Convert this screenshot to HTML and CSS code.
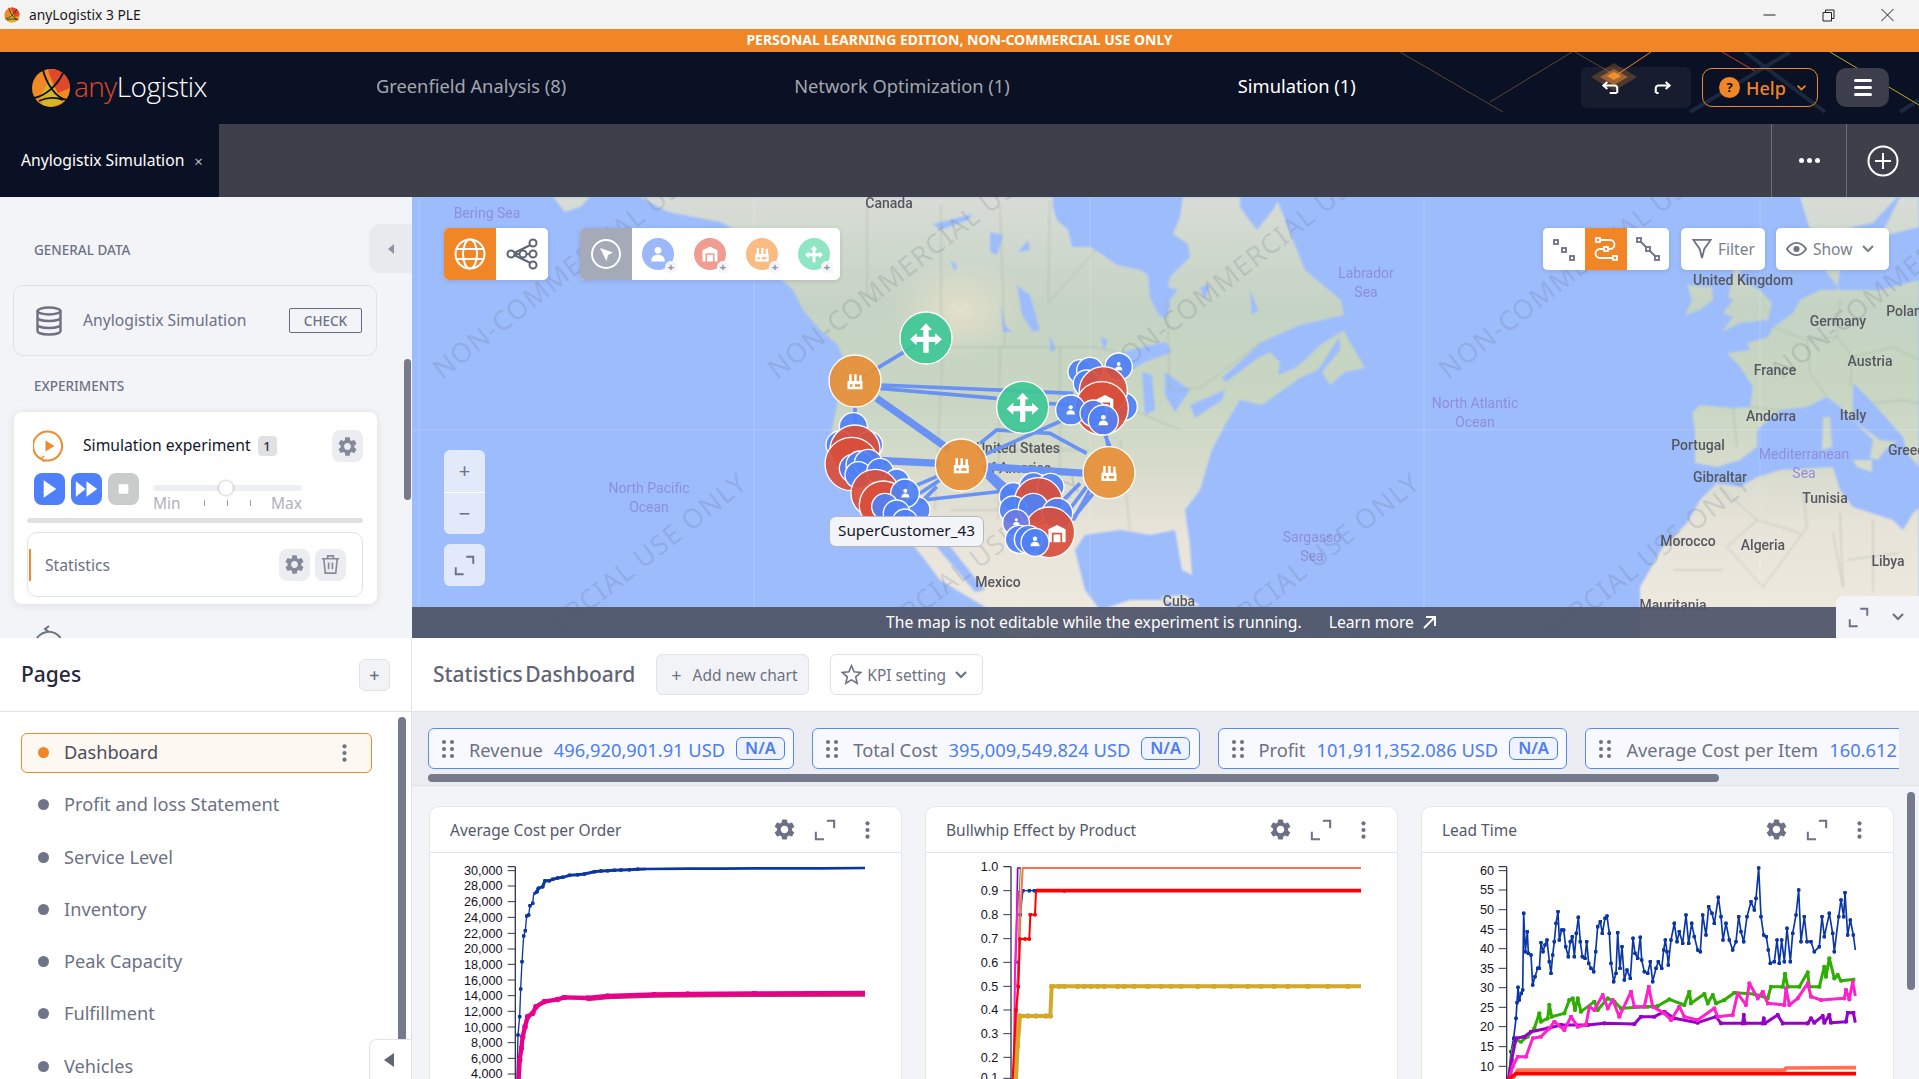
FILE: index.html
```html
<!DOCTYPE html>
<html lang="en">

<head>
    <meta charset="UTF-8">
    <title>anyLogistix 3 PLE</title>
    <link rel="stylesheet" href="styles.css">
</head>

<body>
    <svg class="icon-defs" width="0" height="0">
        <defs>
            <marker id="dot-blue" viewBox="0 0 10 10" refX="5" refY="5" markerWidth="12" markerHeight="12" markerUnits="userSpaceOnUse"><circle cx="5" cy="5" r="5" fill="#0b37a5" /></marker>
            <marker id="dot-green" viewBox="0 0 10 10" refX="5" refY="5" markerWidth="13" markerHeight="13" markerUnits="userSpaceOnUse"><circle cx="5" cy="5" r="5" fill="#2eae00" /></marker>
            <marker id="dot-purple" viewBox="0 0 10 10" refX="5" refY="5" markerWidth="13" markerHeight="13" markerUnits="userSpaceOnUse"><circle cx="5" cy="5" r="5" fill="#9600c8" /></marker>
            <marker id="dot-magenta" viewBox="0 0 10 10" refX="5" refY="5" markerWidth="13" markerHeight="13" markerUnits="userSpaceOnUse"><circle cx="5" cy="5" r="5" fill="#ff22cc" /></marker>
            <marker id="dot-pink" viewBox="0 0 10 10" refX="5" refY="5" markerWidth="17" markerHeight="17" markerUnits="userSpaceOnUse"><circle cx="5" cy="5" r="5" fill="#e6008c" /></marker>
            <marker id="dot-gold" viewBox="0 0 10 10" refX="5" refY="5" markerWidth="16" markerHeight="16" markerUnits="userSpaceOnUse"><circle cx="5" cy="5" r="5" fill="#d2a92b" /></marker>
            <marker id="dot-red" viewBox="0 0 10 10" refX="5" refY="5" markerWidth="12" markerHeight="12" markerUnits="userSpaceOnUse"><circle cx="5" cy="5" r="5" fill="#ff0000" /></marker>
        </defs>
        <symbol id="i-logo" viewBox="0 0 40 40">
            <circle cx="20" cy="20" r="19" fill="#f08a24" />
            <path d="M17 1.500A19 19 0 0 1 39 20L27 25 19 8z" fill="#e0472b" />
            <path d="M19 12 31 34A19 19 0 0 1 12 37L9 28z" fill="#d7b528" />
            <path d="M12 2C15 14 24 30 36 32M3 30C14 28 26 18 32 5M8 33C16 29 26 29 32 32" fill="none" stroke="#0b1124" stroke-width="1.800" />
        </symbol>
        <symbol id="i-gear" viewBox="0 0 24 24">
            <path fill="currentColor" d="M19.14 12.94c.04-.3.06-.61.06-.94 0-.32-.02-.64-.07-.94l2.03-1.58a.49.49 0 0 0 .12-.61l-1.92-3.32a.488.488 0 0 0-.59-.22l-2.39.96c-.5-.38-1.03-.7-1.62-.94l-.36-2.54a.484.484 0 0 0-.48-.41h-3.84c-.24 0-.43.17-.47.41l-.36 2.54c-.59.24-1.13.57-1.62.94l-2.39-.96c-.22-.08-.47 0-.59.22L2.74 8.87c-.12.21-.08.47.12.61l2.03 1.58c-.05.3-.09.63-.09.94s.02.64.07.94l-2.03 1.58a.49.49 0 0 0-.12.61l1.92 3.32c.12.22.37.29.59.22l2.39-.96c.5.38 1.03.7 1.62.94l.36 2.54c.05.24.24.41.48.41h3.84c.24 0 .44-.17.47-.41l.36-2.54c.59-.24 1.13-.56 1.62-.94l2.39.96c.22.08.47 0 .59-.22l1.92-3.32c.12-.22.07-.47-.12-.61l-2.01-1.58zM12 15.6c-1.98 0-3.6-1.62-3.6-3.6s1.62-3.6 3.6-3.6 3.6 1.62 3.6 3.6-1.62 3.6-3.6 3.6z" />
        </symbol>
        <symbol id="i-expand" viewBox="0 0 24 24">
            <path d="M2 14v8h9M14 2h8v8" fill="none" stroke="currentColor" stroke-width="2.200" />
        </symbol>
        <symbol id="i-dots" viewBox="0 0 8 24">
            <circle cx="4" cy="4" r="2.500" fill="currentColor" />
            <circle cx="4" cy="12" r="2.500" fill="currentColor" />
            <circle cx="4" cy="20" r="2.500" fill="currentColor" />
        </symbol>
        <symbol id="i-grip" viewBox="0 0 12 18">
            <circle cx="2" cy="2" r="2" fill="currentColor" />
            <circle cx="10" cy="2" r="2" fill="currentColor" />
            <circle cx="2" cy="9" r="2" fill="currentColor" />
            <circle cx="10" cy="9" r="2" fill="currentColor" />
            <circle cx="2" cy="16" r="2" fill="currentColor" />
            <circle cx="10" cy="16" r="2" fill="currentColor" />
        </symbol>
        <symbol id="i-chevron" viewBox="0 0 14 10">
            <path d="M2 2l5 5 5-5" fill="none" stroke="currentColor" stroke-width="2.200" />
        </symbol>
        <symbol id="i-factory" viewBox="0 0 24 24">
            <path fill="#fff" fill-rule="evenodd" d="M3 22V12h2V4h3v8h3V4h3v8h3V5h3v7h1v10zM6 16v3h3v-3zM12 16v3h6v-3z" />
        </symbol>
        <symbol id="i-fork" viewBox="0 0 24 24">
            <path fill="#fff" d="M12 1l4.500 5H14v5h5V8.500l5 4.500-5 4.500V15h-5v8h-4v-8H5v2.500L0 13l5-4.500V11h5V6H7.500z" />
        </symbol>
        <symbol id="i-person" viewBox="0 0 24 24">
            <circle cx="12" cy="7" r="4.500" fill="#fff" />
            <path fill="#fff" d="M3 22c0-6 3-9 9-9s9 3 9 9z" />
        </symbol>
        <symbol id="i-store" viewBox="0 0 24 24">
            <path fill="#fff" fill-rule="evenodd" d="M12 2 22 7v15h-4V11H6v11H2V7zM8 13h8v9H8z" />
        </symbol>
    </svg>

    <div class="titlebar">
        <svg class="title-logo"><use href="#i-logo" /></svg>
        <span class="title-text">anyLogistix 3 PLE</span>
        <div class="window-btns">
            <svg viewBox="0 0 14 14"><path d="M1 7h12" stroke="#222" fill="none" /></svg>
            <svg viewBox="0 0 14 14"><path d="M1.500 4.500h8.500v8.500h-8.500zM4 4.500v-2.500h8.500v8.500h-2.500" stroke="#222" fill="none" /></svg>
            <svg viewBox="0 0 14 14"><path d="M1 1l12 12M13 1l-12 12" stroke="#222" fill="none" /></svg>
        </div>
    </div>
    <div class="banner">PERSONAL LEARNING EDITION, NON-COMMERCIAL USE ONLY</div>

    <header class="topnav">
        <svg class="nav-lines" viewBox="1300 52 619 72">
            <path d="M1400 52 1503 112M1490 102 1572 52M1575 52 1620 78" stroke="#5b4630" fill="none" />
            <path d="M1690 112 1790 52M1745 52 1825 112M1900 112 1919 100" stroke="#1c2740" stroke-width="4" fill="none" />
            <path d="M1615 76 1651 52" stroke="#e8862a" fill="none" />
            <path d="M1722 52 1755 71" stroke="#d03a2e" fill="none" />
            <path d="M1830 52 1919 105" stroke="#c8a52a" fill="none" />
            <path d="M1591 77 1614 63 1637 77 1614 91z" fill="#f08a24" opacity=".25" />
            <path d="M1600 77 1614 69 1628 77 1614 85z" fill="#f08a24" opacity=".5" />
            <path d="M1607 76 1614 72 1621 76 1614 80z" fill="#f08a24" />
        </svg>
        <div class="brand">
            <svg class="brand-mark"><use href="#i-logo" /></svg>
            <span class="brand-name"><span class="brand-any">any</span>Logistix</span>
        </div>
        <nav class="nav-links">
            <a>Greenfield Analysis (8)</a>
            <a>Network Optimization (1)</a>
            <a class="active">Simulation (1)</a>
        </nav>
        <div class="nav-tools">
            <div class="undo-group">
                <svg viewBox="0 0 24 24"><path d="M20 19h-9M8 5 3 9.500l5 4.500M3 9.500h14a3.500 3.500 0 0 1 3.500 3.500v6" fill="none" stroke="#fff" stroke-width="2.600" /></svg>
                <svg viewBox="0 0 24 24"><path d="M4 19h3M16 5l5 4.500-5 4.500M21 9.500H7a3.500 3.500 0 0 0-3.500 3.500v6" fill="none" stroke="#fff" stroke-width="2.600" /></svg>
            </div>
            <button class="help-btn"><span class="help-mark">?</span>Help<svg class="help-chevron"><use href="#i-chevron" /></svg></button>
            <button class="menu-btn"><span></span><span></span><span></span></button>
        </div>
    </header>

    <div class="tabbar">
        <div class="tab"><span class="tab-name">Anylogistix Simulation</span><span class="tab-close">×</span></div>
        <div class="tab-spacer"></div>
        <div class="tab-action"><span class="tab-dots"></span></div>
        <div class="tab-action tab-add">
            <svg viewBox="0 0 32 32"><circle cx="16" cy="16" r="14.500" fill="none" stroke="#fff" stroke-width="2" /><path d="M16 8v16M8 16h16" stroke="#fff" stroke-width="2" /></svg>
        </div>
    </div>

    <main class="workspace">
        <aside class="side-top">
            <div class="side-collapse"><span></span></div>
            <h4 class="side-title">GENERAL DATA</h4>
            <div class="data-card">
                <svg class="db-icon" viewBox="0 0 26 30"><g fill="none" stroke="#6c7184" stroke-width="2.400"><ellipse cx="13" cy="5" rx="11.500" ry="3.500" /><path d="M1.500 5v20c0 2 5 3.500 11.500 3.500s11.500-1.500 11.500-3.500V5M1.500 11.500c0 2 5 3.500 11.500 3.500s11.500-1.500 11.500-3.500M1.500 18.500c0 2 5 3.500 11.500 3.500s11.500-1.500 11.500-3.500" /></g></svg>
                <span class="data-name">Anylogistix Simulation</span>
                <button class="check-btn">CHECK</button>
            </div>
            <h4 class="side-title side-title-next">EXPERIMENTS</h4>
            <div class="exp-card">
                <div class="exp-head">
                    <svg class="exp-icon" viewBox="0 0 32 32"><path d="M8 29A14.500 14.500 0 1 1 16 30.500H9" fill="none" stroke="#f08a2a" stroke-width="2" /><path d="M12 31l-4-2 3-3" fill="none" stroke="#f08a2a" stroke-width="1.500" /><path d="M12.500 10.500 21.500 16 12.500 21.500z" fill="#f08a2a" /></svg>
                    <span class="exp-name">Simulation experiment</span>
                    <span class="exp-badge">1</span>
                    <button class="icon-tile"><svg><use href="#i-gear" /></svg></button>
                </div>
                <div class="exp-controls">
                    <button class="run-btn"><svg viewBox="0 0 32 32"><path d="M10 7l13 9-13 9z" fill="#fff" /></svg></button>
                    <button class="run-btn"><svg viewBox="0 0 32 32"><path d="M5 8l10 8-10 8zM16 8l11 8-11 8z" fill="#fff" /></svg></button>
                    <button class="run-btn run-stop"><svg viewBox="0 0 32 32"><rect x="11" y="11" width="10" height="10" rx="1" fill="#fff" /></svg></button>
                    <div class="speed">
                        <div class="speed-track"><span class="speed-knob"></span></div>
                        <div class="speed-labels"><span>Min</span><i></i><i></i><i></i><span>Max</span></div>
                    </div>
                </div>
                <div class="exp-progress"></div>
                <div class="stat-row">
                    <span class="stat-name">Statistics</span>
                    <button class="icon-tile"><svg><use href="#i-gear" /></svg></button>
                    <button class="icon-tile"><svg viewBox="0 0 24 24"><path d="M3 6h18M9 6V3h6v3M5 6l1.500 15h11L19 6M10 10v7M14 10v7" fill="none" stroke="currentColor" stroke-width="1.700" /></svg></button>
                </div>
            </div>
            <svg class="next-exp" viewBox="0 0 32 32"><path d="M3 18A14 14 0 0 1 29 14M17 1l-4 3 4 3" fill="none" stroke="#6c7184" stroke-width="2" /></svg>
            <div class="side-scroll"></div>
        </aside>

        <section class="map-pane">
            <svg class="map" viewBox="412 197 1507 441">
                <defs>
                    <linearGradient id="land" x1="0" y1="197" x2="0" y2="638" gradientUnits="userSpaceOnUse">
                        <stop offset="0" stop-color="#d8ddd6" />
                        <stop offset=".25" stop-color="#c5d3c4" />
                        <stop offset=".45" stop-color="#c8d6c2" />
                        <stop offset=".6" stop-color="#d5dbcb" />
                        <stop offset=".75" stop-color="#e7e3d9" />
                        <stop offset="1" stop-color="#f0ebe0" />
                    </linearGradient>
                    <radialGradient id="prairie"><stop offset="0" stop-color="#e3e0ca" /><stop offset="1" stop-color="#e3e0ca" stop-opacity="0" /></radialGradient>
                    <filter id="soft" filterUnits="userSpaceOnUse" x="412" y="197" width="1507" height="441"><feGaussianBlur stdDeviation=".8" /></filter>
                    <filter id="soft-text" filterUnits="userSpaceOnUse" x="412" y="197" width="1507" height="441"><feGaussianBlur stdDeviation=".4" /></filter>
                </defs>
                <rect x="412" y="197" width="1507" height="441" fill="#9dbcfc" />
                <g filter="url(#soft)">
                    <g fill="url(#land)">
                        <path d="M553 197 565 212 580 207 590 197zM640 197 668 212 720 222 745 235 765 265 793 290 803 310 820 330 837 344 843 357 838 375 838 400 832 430 840 465 858 500 880 525 905 535 925 560 940 580 985 607 1010 638 1110 638 1140 625 1170 610 1165 600 1130 600 1100 610 1085 590 1075 550 1085 535 1120 530 1150 535 1175 530 1182 570 1192 575 1190 545 1185 510 1200 490 1212 450 1225 425 1240 400 1262 405 1300 378 1318 370 1344 330 1344 315 1341 300 1305 270 1276 197z" />
                        <path d="M1339 323 1365 368 1345 372 1330 385 1322 372 1340 350z" />
                        <path d="M1160 597 1185 595 1200 606 1175 606z" />
                        <!-- europe and north africa -->
                        <path d="M1825 270 1840 270 1837 290 1820 290 1800 300 1793 313 1773 327 1768 337 1747 343 1750 350 1727 353 1740 367 1753 387 1750 407 1733 408 1700 405 1692 413 1695 430 1695 463 1717 467 1740 460 1757 447 1757 430 1780 410 1807 407 1827 397 1840 407 1857 423 1880 440 1897 442 1885 450 1878 460 1870 458 1873 440 1853 420 1853 383 1873 403 1903 437 1907 453 1919 467 1919 280 1880 290 1840 290z" />
                        <path d="M1687 285 1712 287 1713 300 1700 310 1685 315 1692 300z" />
                        <path d="M1740 243 1740 280 1760 290 1772 303 1768 320 1740 323 1722 332 1733 317 1723 313 1733 300 1728 297z" />
                        <path d="M1717 483 1740 487 1757 477 1780 470 1833 467 1840 490 1853 507 1893 520 1903 530 1913 513 1919 508 1919 638 1640 638 1640 587 1663 547 1687 523 1700 500z" />
                        <path d="M1853 460 1872 460 1872 472 1857 467zM1823 417 1830 417 1832 447 1822 450z" />
                        <path d="M1800 197 1813 240 1833 253 1853 227 1873 223 1897 197zM1880 237 1919 227 1919 197 1900 197z" />
                    </g>
                    <ellipse cx="960" cy="310" rx="70" ry="50" fill="url(#prairie)" />
                    <g fill="#9dbcfc">
                        <path d="M1053 197 1183 197 1180 217 1173 234 1188 244 1190 257 1170 277 1168 287 1170 307 1165 319 1158 314 1150 297 1148 275 1140 270 1117 265 1103 255 1090 247 1072 247 1068 230 1057 220 1053 207z" />
                        <path d="M1240 197 1280 197 1273 210 1257 230 1247 217 1240 207z" />
                        <path d="M1344 315 1300 325 1262 342 1222 378 1226 382 1258 358 1270 352 1280 362 1278 375 1295 368 1305 360 1320 345 1344 330z" />
                        <path d="M925 530 945 540 985 590 975 592 935 545z" />
                        <path d="M933 224 973 214 968 220 940 230zM990 232 1003 235 997 255 990 252zM1028 240 1030 250 1018 252zM950 260 957 265 955 272zM1017 285 1023 290 1030 295 1040 330 1033 332 1022 315zM1000 300 1005 325 1012 332 1003 332zM1050 335 1056 350 1050 352zM1100 337 1108 340 1104 350z" />
                        <path d="M1122 352 1165 342 1172 352 1145 362 1128 372zM1142 372 1152 375 1155 410 1145 415zM1165 372 1190 390 1175 412 1165 395zM1190 405 1225 390 1222 400 1195 418zM1200 287 1210 285 1205 300zM1250 290 1258 310 1252 315zM1160 285 1178 290 1165 305z" />
                    </g>
                    <g fill="none" stroke="#9aa79a" stroke-width=".7" opacity=".75">
                        <path d="M867 205V295L880 300M941 205V310L948 345M1000 205 1005 345M1050 200 1048 303 1096 250M950 347H1096L1125 355M943 347 935 510M1000 347 998 520M1060 347 1060 510M1110 400 1180 430M1120 440 1130 530M985 450H1090M950 510H1050M1167 300 1170 390 1200 388 1262 342" />
                        <path d="M1773 327 1807 340 1837 337 1853 357 1850 387M1837 337 1840 300M1853 357 1893 347 1919 360M1873 403 1903 400 1919 403M1827 397 1810 373 1807 340M1750 407 1780 410M1733 408 1737 447M1717 467 1720 487M1720 487 1757 520 1727 547 1763 587 1807 527 1803 493M1757 520 1800 533M1833 533 1843 587 1840 513M1873 593V520M1847 560 1900 553M1723 570 1673 570" />
                    </g>
                </g>
                <g stroke="#fff" stroke-opacity=".2">
                    <path d="M419 197V607M754 197V607M1090 197V607M1424 197V607M1760 197V607M412 430H1919" />
                </g>
                <g class="map-text" filter="url(#soft-text)">
                    <text class="sea" x="487" y="218">Bering Sea</text>
                    <text class="land" x="889" y="208">Canada</text>
                    <text class="sea" x="1366" y="278">Labrador</text>
                    <text class="sea" x="1366" y="297">Sea</text>
                    <text class="sea" x="649" y="493">North Pacific</text>
                    <text class="sea" x="649" y="512">Ocean</text>
                    <text class="sea" x="1475" y="408">North Atlantic</text>
                    <text class="sea" x="1475" y="427">Ocean</text>
                    <text class="sea" x="1312" y="542">Sargasso</text>
                    <text class="sea" x="1312" y="561">Sea</text>
                    <text class="sea" x="1804" y="459">Mediterranean</text>
                    <text class="sea" x="1804" y="478">Sea</text>
                    <text class="land" x="1743" y="285">United Kingdom</text>
                    <text class="land" x="1838" y="326">Germany</text>
                    <text class="land" x="1908" y="316">Poland</text>
                    <text class="land" x="1775" y="375">France</text>
                    <text class="land" x="1870" y="366">Austria</text>
                    <text class="land" x="1771" y="421">Andorra</text>
                    <text class="land" x="1853" y="420">Italy</text>
                    <text class="land" x="1698" y="450">Portugal</text>
                    <text class="land" x="1910" y="455">Greece</text>
                    <text class="land" x="1720" y="482">Gibraltar</text>
                    <text class="land" x="1825" y="503">Tunisia</text>
                    <text class="land" x="1688" y="546">Morocco</text>
                    <text class="land" x="1763" y="550">Algeria</text>
                    <text class="land" x="1888" y="566">Libya</text>
                    <text class="land" x="1673" y="610">Mauritania</text>
                    <text class="land" x="1179" y="606">Cuba</text>
                    <text class="land" x="998" y="587">Mexico</text>
                    <text class="land" x="1018" y="453">United States</text>
                    <text class="land" x="1017" y="473">of America</text>
                </g>
                <g class="watermark">
                    <text transform="translate(442 380) rotate(-38)">NON-COMMERCIAL USE ONLY</text>
                    <text transform="translate(777 380) rotate(-38)">NON-COMMERCIAL USE ONLY</text>
                    <text transform="translate(1112 380) rotate(-38)">NON-COMMERCIAL USE ONLY</text>
                    <text transform="translate(1448 380) rotate(-38)">NON-COMMERCIAL USE ONLY</text>
                    <text transform="translate(1782 380) rotate(-38)">NON-COMMERCIAL USE ONLY</text>
                    <text transform="translate(431 735) rotate(-38)">NON-COMMERCIAL USE ONLY</text>
                    <text transform="translate(767 735) rotate(-38)">NON-COMMERCIAL USE ONLY</text>
                    <text transform="translate(1104 735) rotate(-38)">NON-COMMERCIAL USE ONLY</text>
                    <text transform="translate(1435 735) rotate(-38)">NON-COMMERCIAL USE ONLY</text>
                </g>

                <!-- nodes and routes, drawn in a 3x grid -->
                <g transform="translate(780 300) scale(.33333)">
                    <g class="routes">
                        <path d="M225 245 440 115M300 255 880 280M300 265 650 295M800 310 870 315M225 320 225 390" />
                        <path class="route-thick" d="M290 295 510 450M270 480 480 490M620 500 920 520M620 515 720 600" />
                        <path d="M600 470 850 360M600 430 650 390 810 400 920 460M985 440 970 370M990 440 960 370" />
                        <path d="M400 560 470 530M420 580 480 540M430 600 700 570M420 610 470 560M920 560 860 640M930 570 880 660M900 550 840 610M940 580 850 690" />
                        <path d="M620 530 680 590 660 600" />
                    </g>
                    <circle class="node-orange" cx="225" cy="243" r="78" />
                    <circle class="node-orange" cx="544" cy="495" r="78" />
                    <circle class="node-orange" cx="987" cy="518" r="78" />
                    <circle class="node-green" cx="438" cy="114" r="78" />
                    <circle class="node-green" cx="728" cy="322" r="78" />
                    <use href="#i-factory" x="195" y="213" width="60" height="60" />
                    <use href="#i-factory" x="514" y="465" width="60" height="60" />
                    <use href="#i-factory" x="957" y="488" width="60" height="60" />
                    <use href="#i-fork" x="390" y="66" width="96" height="96" />
                    <use href="#i-fork" x="680" y="274" width="96" height="96" />

                    <circle class="node-blue" cx="900" cy="215" r="36" />
                    <circle class="node-blue" cx="930" cy="212" r="40" />
                    <circle class="node-blue" cx="1016" cy="200" r="41" />
                    <use href="#i-person" x="1001" y="183" width="30" height="30" />
                    <circle class="node-blue" cx="920" cy="250" r="40" />
                    <circle class="node-blue" cx="1030" cy="320" r="42" />
                    <circle class="node-red" cx="970" cy="272" r="72" />
                    <circle class="node-red" cx="965" cy="325" r="80" />
                    <use href="#i-store" x="945" y="280" width="60" height="60" />
                    <circle class="node-blue" cx="872" cy="330" r="45" />
                    <use href="#i-person" x="855" y="312" width="34" height="34" />
                    <circle class="node-blue" cx="940" cy="340" r="40" />
                    <circle class="node-blue" cx="970" cy="360" r="45" />
                    <use href="#i-person" x="951" y="341" width="38" height="38" />

                    <circle class="node-blue" cx="220" cy="380" r="42" />
                    <circle class="node-blue" cx="180" cy="435" r="42" />
                    <circle class="node-blue" cx="268" cy="435" r="40" />
                    <circle class="node-red" cx="225" cy="450" r="75" />
                    <circle class="node-red" cx="215" cy="492" r="80" />
                    <circle class="node-blue" cx="220" cy="505" r="42" />
                    <circle class="node-blue" cx="240" cy="495" r="42" />
                    <circle class="node-blue" cx="265" cy="490" r="42" />
                    <circle class="node-blue" cx="235" cy="525" r="40" />
                    <circle class="node-blue" cx="300" cy="515" r="40" />
                    <circle class="node-blue" cx="350" cy="545" r="38" />
                    <circle class="node-red" cx="285" cy="580" r="72" />
                    <circle class="node-red" cx="310" cy="615" r="72" />
                    <circle class="node-blue" cx="410" cy="630" r="40" />
                    <circle class="node-blue" cx="375" cy="580" r="43" />
                    <use href="#i-person" x="360" y="563" width="32" height="32" />
                    <circle class="node-blue" cx="315" cy="620" r="40" />
                    <circle class="node-blue" cx="350" cy="640" r="40" />
                    <circle class="node-blue" cx="375" cy="665" r="38" />

                    <circle class="node-blue" cx="700" cy="590" r="42" />
                    <circle class="node-blue" cx="760" cy="560" r="42" />
                    <circle class="node-blue" cx="812" cy="560" r="40" />
                    <circle class="node-red" cx="775" cy="605" r="72" />
                    <circle class="node-blue" cx="700" cy="630" r="42" />
                    <circle class="node-blue" cx="760" cy="625" r="45" />
                    <circle class="node-blue" cx="832" cy="640" r="46" />
                    <circle class="node-red" cx="808" cy="697" r="76" />
                    <use href="#i-store" x="800" y="670" width="62" height="62" />
                    <circle class="node-blue node-pale" cx="708" cy="668" r="40" />
                    <use href="#i-person" x="696" y="652" width="26" height="26" />
                    <circle class="node-blue" cx="718" cy="718" r="42" />
                    <circle class="node-blue" cx="745" cy="718" r="42" />
                    <circle class="node-blue" cx="765" cy="727" r="42" />
                    <use href="#i-person" x="747" y="706" width="36" height="36" />
                </g>
            </svg>

            <div class="tool-group tool-mode">
                <button class="tool tool-orange"><svg viewBox="0 0 32 32"><g fill="none" stroke="#fff" stroke-width="2"><circle cx="16" cy="16" r="14.500" /><ellipse cx="16" cy="16" rx="7" ry="14.500" /><path d="M2 11h28M2 21h28" /></g></svg></button>
                <button class="tool"><svg viewBox="0 0 32 32"><g fill="none" stroke="#5f6476" stroke-width="2"><circle cx="5" cy="16" r="3.500" /><circle cx="17" cy="16" r="3.500" /><circle cx="27" cy="5" r="3.500" /><circle cx="27" cy="16" r="3.500" /><circle cx="27" cy="27" r="3.500" /><path d="M8 16h5.500M20 16h3.500M8 15l16.500-8M8 17l16.500 8" /></g></svg></button>
            </div>
            <div class="tool-group tool-add">
                <button class="tool tool-grey"><svg viewBox="0 0 32 32"><circle cx="16" cy="16" r="14" fill="none" stroke="#fff" stroke-width="2" /><path d="M10 10l13 4.500-5 2.500-1.500 6z" fill="#fff" /></svg></button>
                <button class="add-node add-blue"><svg><use href="#i-person" /></svg><i>+</i></button>
                <button class="add-node add-red"><svg><use href="#i-store" /></svg><i>+</i></button>
                <button class="add-node add-orange"><svg><use href="#i-factory" /></svg><i>+</i></button>
                <button class="add-node add-green"><svg><use href="#i-fork" /></svg><i>+</i></button>
            </div>
            <div class="tool-group tool-routes">
                <button class="tool tool-small"><svg viewBox="0 0 24 24"><g fill="none" stroke="#6c7184" stroke-width="1.800"><rect x="2" y="3" width="4" height="4" /><rect x="10" y="11" width="4" height="4" /><rect x="18" y="19" width="4" height="4" /></g></svg></button>
                <button class="tool tool-small tool-orange"><svg viewBox="0 0 24 24"><g fill="none" stroke="#fff" stroke-width="1.800"><rect x="2" y="1" width="4" height="4" /><rect x="10" y="10" width="4" height="4" /><rect x="19" y="19" width="4" height="4" /><path d="M6 3h10a3 3 0 0 1 0 9h-2M10 12H6a4 4 0 0 0 0 9h13" /></g></svg></button>
                <button class="tool tool-small"><svg viewBox="0 0 24 24"><g fill="none" stroke="#6c7184" stroke-width="1.800"><rect x="1" y="1" width="4" height="4" /><rect x="10" y="10" width="4" height="4" /><rect x="19" y="19" width="4" height="4" /><path d="M5 5l5 5M14 14l5 5" /></g></svg></button>
            </div>
            <button class="map-filter"><svg viewBox="0 0 22 24"><path d="M1.500 2h19L13.500 12 11 22 8.500 12z" fill="none" stroke="#6c7184" stroke-width="2" /></svg>Filter</button>
            <button class="map-show"><svg viewBox="0 0 24 16"><path d="M1 8C5 2 9 1 12 1s7 1 11 7c-4 6-8 7-11 7S5 14 1 8z" fill="none" stroke="#6c7184" stroke-width="2" /><circle cx="12" cy="8" r="3.500" fill="#6c7184" /></svg>Show<svg class="show-chevron"><use href="#i-chevron" /></svg></button>

            <div class="zoom-box"><button>+</button><button>−</button></div>
            <button class="zoom-full"><svg><use href="#i-expand" /></svg></button>
            <div class="map-tip">SuperCustomer_43</div>

            <div class="map-note"><span>The map is not editable while the experiment is running.</span><a>Learn more<svg viewBox="0 0 16 16"><path d="M2 14 13 3M4 3h9v9" fill="none" stroke="#fff" stroke-width="2" /></svg></a></div>
            <div class="map-corner"><svg class="corner-expand"><use href="#i-expand" /></svg><svg class="corner-chevron"><use href="#i-chevron" /></svg></div>
        </section>

        <aside class="pages">
            <div class="pages-head">
                <h2>Pages</h2>
                <button class="plus-btn">+</button>
            </div>
            <ul class="page-list">
                <li class="selected">Dashboard<svg class="page-menu"><use href="#i-dots" /></svg></li>
                <li>Profit and loss Statement</li>
                <li>Service Level</li>
                <li>Inventory</li>
                <li>Peak Capacity</li>
                <li>Fulfillment</li>
                <li>Vehicles</li>
            </ul>
            <div class="pages-scroll"></div>
            <button class="pages-collapse"><span></span></button>
        </aside>

        <section class="dash">
            <div class="dash-head">
                <h2>Statistics Dashboard</h2>
                <button class="dash-btn dash-add"><span>+</span>Add new chart</button>
                <button class="dash-btn dash-kpi"><svg viewBox="0 0 24 24"><path d="M12 2l3 7 7.500.7-5.700 5 1.700 7.300-6.500-3.900L5.500 22l1.700-7.300-5.700-5L9 9z" fill="none" stroke="#6c7184" stroke-width="1.800" /></svg>KPI setting<svg class="kpi-chevron"><use href="#i-chevron" /></svg></button>
            </div>
            <div class="kpi-band">
                <div class="kpi-strip">
                    <div class="kpi"><svg class="grip"><use href="#i-grip" /></svg><span class="kpi-label">Revenue</span><span class="kpi-value">496,920,901.91 USD</span><span class="kpi-na">N/A</span></div>
                    <div class="kpi"><svg class="grip"><use href="#i-grip" /></svg><span class="kpi-label">Total Cost</span><span class="kpi-value">395,009,549.824 USD</span><span class="kpi-na">N/A</span></div>
                    <div class="kpi"><svg class="grip"><use href="#i-grip" /></svg><span class="kpi-label">Profit</span><span class="kpi-value">101,911,352.086 USD</span><span class="kpi-na">N/A</span></div>
                    <div class="kpi"><svg class="grip"><use href="#i-grip" /></svg><span class="kpi-label">Average Cost per Item</span><span class="kpi-value">160.612 USD</span><span class="kpi-na">N/A</span></div>
                </div>
                <div class="kpi-scroll"></div>
            </div>
            <div class="charts">
                <article class="chart-card">
                    <div class="chart-head"><span>Average Cost per Order</span><svg class="ch-gear"><use href="#i-gear" /></svg><svg class="ch-expand"><use href="#i-expand" /></svg><svg class="ch-dots"><use href="#i-dots" /></svg></div>
                    <svg class="plot" viewBox="27 639 1416 678">
                        <g class="axis"><path class="spine" d="M283 680V1320M260 680H283" />
                            <path d="M260 692H283M260 738H283M260 785H283M260 832H283M260 880H283M260 927H283M260 973H283M260 1020H283M260 1067H283M260 1114H283M260 1161H283M260 1208H283M260 1255H283M260 1302H283" />
                        </g>
                        <g class="ticks">
                            <text x="245" y="704">30,000</text><text x="245" y="751">28,000</text><text x="245" y="797">26,000</text><text x="245" y="845">24,000</text><text x="245" y="893">22,000</text><text x="245" y="938">20,000</text><text x="245" y="986">18,000</text><text x="245" y="1034">16,000</text><text x="245" y="1079">14,000</text><text x="245" y="1127">12,000</text><text x="245" y="1175">10,000</text><text x="245" y="1220">8,000</text><text x="245" y="1268">6,000</text><text x="245" y="1315">4,000</text>
                        </g>
                        <polyline class="ln" stroke="#b8305c" stroke-width="8" points="500,1080 560,1074 700,1069 1000,1067 1332,1066" />
                        <polyline class="ln" stroke="#0b37a5" stroke-width="4" marker-mid="url(#dot-blue)" points="288,1317 291,1185 296,1130 299,1047 303,965 308,888 313,872 317,828 323,825 327,797 335,790 338,762" />
                        <polyline class="ln" stroke="#0b37a5" stroke-width="9" marker-mid="url(#dot-blue)" points="338,762 348,755 352,745 365,740 372,722 385,722 395,718 410,714 425,712 445,706 470,704 490,702 520,695 540,693 560,692 580,691 600,690 625,689 650,688 675,687" />
                        <polyline class="ln" stroke="#0b37a5" stroke-width="8" points="675,687 800,686 900,686 1000,685 1100,685 1200,685 1332,684" />
                        <polyline class="ln" stroke="#e6008c" stroke-width="13" marker-mid="url(#dot-pink)" points="293,1317 296,1260 301,1225 305,1190 312,1160 320,1130 335,1120 345,1100 370,1085 410,1078 430,1072 500,1074 560,1068 700,1063 800,1062 1000,1060 1332,1059" />
                    </svg>
                </article>
                <article class="chart-card">
                    <div class="chart-head"><span>Bullwhip Effect by Product</span><svg class="ch-gear"><use href="#i-gear" /></svg><svg class="ch-expand"><use href="#i-expand" /></svg><svg class="ch-dots"><use href="#i-dots" /></svg></div>
                    <svg class="plot" viewBox="15 639 1416 678">
                        <g class="axis"><path class="spine" d="M270 680V1320M247 680H270" />
                            <path d="M247 752H270M247 824H270M247 896H270M247 967H270M247 1039H270M247 1110H270M247 1181H270M247 1252H270M247 1315H270" />
                        </g>
                        <g class="ticks">
                            <text x="232" y="693">1.0</text><text x="232" y="765">0.9</text><text x="232" y="837">0.8</text><text x="232" y="908">0.7</text><text x="232" y="980">0.6</text><text x="232" y="1052">0.5</text><text x="232" y="1122">0.4</text><text x="232" y="1193">0.3</text><text x="232" y="1265">0.2</text><text x="232" y="1325">0.1</text>
                        </g>
                        <polyline class="ln" stroke="#8a00c0" stroke-width="5" points="282,1000 286,896 290,684 300,684" />
                        <polyline class="ln" stroke="#2eae00" stroke-width="3" points="292,1000 295,760 298,684" />
                        <polyline class="ln" stroke="#0b37a5" stroke-width="4" marker-mid="url(#dot-blue)" points="288,1040 292,967 298,824 306,752 325,752 340,752 430,752 520,752" />
                        <polyline class="ln" stroke="#ff19d5" stroke-width="6" points="278,1317 282,1000 285,896 288,824 292,752" />
                        <polyline class="ln" stroke="#ff7050" stroke-width="6" points="280,1317 292,1000 298,824 305,684 1320,684" />
                        <polyline class="ln" stroke="#d2a92b" stroke-width="12" marker-mid="url(#dot-gold)" points="285,1317 290,1218 297,1128 320,1128 345,1128 375,1128 388,1128 392,1039 415,1039 430,1039 470,1039 490,1039 510,1039 530,1039 550,1039 590,1039 610,1039 640,1039 680,1039 720,1039 750,1039 780,1039 830,1039 880,1039 930,1039 980,1039 1020,1039 1060,1039 1100,1039 1160,1039 1220,1039 1280,1039 1320,1039" />
                        <polyline class="ln" stroke="#ff0000" stroke-width="6" marker-mid="url(#dot-red)" points="275,1317 285,1110 292,1040 297,897 312,897 325,897 328,824 342,824 345,752" />
                        <polyline class="ln" stroke="#ff0000" stroke-width="11" points="345,752 1320,752" />
                    </svg>
                </article>
                <article class="chart-card">
                    <div class="chart-head"><span>Lead Time</span><svg class="ch-gear"><use href="#i-gear" /></svg><svg class="ch-expand"><use href="#i-expand" /></svg><svg class="ch-dots"><use href="#i-dots" /></svg></div>
                    <svg class="plot" viewBox="3 639 1416 678">
                        <g class="axis"><path class="spine" d="M257 680V1320M233 680H257" />
                            <path d="M233 692H257M233 750H257M233 809H257M233 868H257M233 926H257M233 985H257M233 1043H257M233 1102H257M233 1160H257M233 1220H257M233 1279H257" />
                        </g>
                        <g class="ticks">
                            <text x="219" y="704">60</text><text x="219" y="762">55</text><text x="219" y="821">50</text><text x="219" y="881">45</text><text x="219" y="939">40</text><text x="219" y="998">35</text><text x="219" y="1056">30</text><text x="219" y="1115">25</text><text x="219" y="1173">20</text><text x="219" y="1232">15</text><text x="219" y="1292">10</text>
                        </g>
                        <polyline class="ln" stroke="#0b37a5" stroke-width="5" marker-mid="url(#dot-blue)" points="263,1317 270,1235 278,1195 285,1135 288,1088 291,1042 295,1080 301,1060 305,1050 308,820 313,935 319,875 322,940 330,945 335,1035 342,1010 350,985 355,985 360,908 366,935 372,915 378,900 385,965 390,1000 395,945 400,905 405,850 411,815 415,900 422,870 428,870 434,920 442,950 448,905 454,890 460,950 466,880 472,832 478,905 484,950 492,955 497,905 503,970 510,985 518,995 524,935 530,860 538,845 544,880 552,835 558,828 565,880 570,970 578,1025 585,1000 590,878 597,985 603,920 610,1020 618,990 628,1015 636,895 642,940 650,955 658,892 662,960 670,995 680,1000 688,965 695,1025 705,985 712,965 722,985 728,930 733,900 738,935 742,975 750,900 760,850 768,905 775,875 785,910 795,825 803,910 812,850 820,890 830,930 838,935 845,825 855,885 863,800 873,820 880,850 892,772 900,830 906,900 915,850 925,900 935,930 945,905 953,830 960,875 968,905 978,830 990,785 1000,810 1005,775 1013,684 1020,830 1028,885 1036,890 1042,930 1048,970 1060,965 1068,900 1075,970 1082,900 1090,965 1098,865 1108,965 1115,880 1125,825 1133,750 1140,905 1150,830 1158,905 1170,905 1180,935 1195,920 1203,830 1210,890 1225,820 1235,880 1240,935 1253,830 1260,780 1268,830 1272,758 1280,885 1288,840 1297,885 1303,930" />
                        <polyline class="ln" stroke="#2eae00" stroke-width="9" marker-mid="url(#dot-green)" points="265,1300 275,1230 285,1200 300,1205 320,1190 340,1165 355,1120 360,1145 380,1135 385,1095 392,1130 430,1120 445,1080 455,1075 462,1110 470,1075 480,1115 520,1085 530,1110 560,1075 580,1085 600,1105 680,1100 710,1098 745,1078 790,1095 805,1055 810,1090 850,1062 860,1090 875,1065 885,1090 910,1080 940,1058 1000,1062 1040,1075 1050,1040 1085,1040 1092,1002 1100,1040 1135,1040 1160,997 1165,1040 1195,1040 1210,980 1215,1010 1225,955 1240,1015 1250,1005 1260,1022 1303,1018" />
                        <polyline class="ln" stroke="#9600c8" stroke-width="9" marker-mid="url(#dot-purple)" points="262,1317 272,1260 285,1195 310,1190 330,1175 380,1165 420,1155 500,1155 550,1150 640,1152 660,1130 700,1130 730,1115 760,1135 830,1148 885,1130 900,1150 965,1150 968,1125 972,1150 1025,1150 1028,1135 1032,1150 1070,1125 1085,1150 1160,1150 1170,1135 1180,1148 1205,1128 1210,1148 1225,1125 1230,1148 1275,1145 1280,1118 1297,1118 1303,1148" />
                        <polyline class="ln" stroke="#ff22cc" stroke-width="9" marker-mid="url(#dot-magenta)" points="265,1317 275,1280 290,1250 315,1250 335,1195 360,1190 385,1165 400,1145 430,1170 450,1130 470,1160 495,1155 505,1100 520,1110 545,1065 560,1105 575,1080 595,1130 630,1055 640,1100 670,1100 683,1040 695,1100 730,1120 750,1140 775,1100 790,1130 830,1140 880,1105 890,1130 935,1125 950,1060 975,1095 985,1030 1010,1075 1025,1055 1040,1090 1090,1095 1095,1045 1105,1095 1130,1075 1160,1030 1170,1070 1200,1080 1270,1075 1275,1050 1285,1078 1295,1025 1303,1068" />
                        <polyline class="ln" stroke="#ff7050" stroke-width="11" points="275,1317 290,1290 1090,1290 1095,1284 1305,1283" />
                        <polyline class="ln" stroke="#ff0000" stroke-width="11" points="262,1317 285,1301 1305,1301" />
                    </svg>
                </article>
            </div>
            <div class="charts-scroll"></div>
        </section>
    </main>
</body>

</html>
```

FILE: styles.css
```css
* {
    box-sizing: border-box;
    font-family: "Noto Sans", sans-serif;
}

html,
body {
    margin: 0;
    height: 100%;
    overflow: hidden;
}

button {
    font-family: inherit;
    cursor: pointer;
}

.icon-defs {
    position: absolute;
}

/* window chrome */
.titlebar {
    height: 29px;
    background-color: #f3f3f3;
    display: flex;
    align-items: center;
    padding-left: 4px;
}

.title-logo {
    width: 16px;
    height: 16px;
}

.title-text {
    margin-left: 9px;
    font-size: 13.8px;
    color: #1a1a1a;
}

.window-btns {
    margin-left: auto;
    margin-right: 2px;
    display: flex;
}

.window-btns svg {
    width: 59px;
    height: 14px;
}

.banner {
    height: 23px;
    background-color: #f08626;
    color: white;
    font-size: 14px;
    font-weight: 700;
    line-height: 21px;
    text-align: center;
}

/* top nav */
.topnav {
    position: relative;
    height: 72px;
    background-color: #0b1124;
    display: flex;
    align-items: center;
    padding-left: 31px;
}

.nav-lines {
    position: absolute;
    top: 0;
    right: 0;
    width: 619px;
    height: 72px;
}

.brand {
    display: flex;
    align-items: center;
    width: 345px;
}

.brand-mark {
    width: 40px;
    height: 42px;
}

.brand-name {
    font-family: "Open Sans", sans-serif;
    font-size: 28px;
    font-weight: 300;
    color: white;
    letter-spacing: -0.5px;
    margin: -4px 0 0 3px;
}

.brand-any {
    font-family: inherit;
    color: #e4482b;
}

.nav-links {
    display: flex;
    gap: 228px;
    margin-top: -5px;
}

.nav-links a {
    font-size: 18.3px;
    color: #a3a6ae;
}

.nav-links a.active {
    color: white;
}

.nav-tools {
    position: absolute;
    right: 30px;
    top: 15px;
    display: flex;
    align-items: center;
}

.undo-group {
    width: 110px;
    height: 41px;
    background-color: #ffffff0d;
    border-radius: 6px;
    display: flex;
    align-items: center;
    justify-content: center;
    gap: 33px;
}

.undo-group svg {
    width: 19px;
    height: 19px;
}

.help-btn {
    margin-left: 11px;
    width: 116px;
    height: 39px;
    background-color: transparent;
    border: 1px solid #f08626;
    border-radius: 10px;
    color: #f08626;
    font-size: 18px;
    font-weight: 500;
    display: flex;
    align-items: center;
    padding: 0 0 0 16px;
}

.help-mark {
    width: 21px;
    height: 21px;
    margin-right: 6px;
    border-radius: 50%;
    background-color: #f08626;
    color: #0b1124;
    font-size: 13px;
    font-weight: 700;
    line-height: 21px;
    text-align: center;
}

.help-chevron {
    width: 11px;
    height: 8px;
    margin-left: 10px;
}

.menu-btn {
    margin-left: 18px;
    width: 53px;
    height: 39px;
    background-color: #3c3f4b;
    border: none;
    border-radius: 10px;
    display: flex;
    flex-direction: column;
    align-items: center;
    justify-content: center;
    gap: 4px;
}

.menu-btn span {
    width: 18px;
    height: 3px;
    border-radius: 2px;
    background-color: white;
}

/* tabs */
.tabbar {
    height: 73px;
    background-color: #3d3f4b;
    display: flex;
}

.tab {
    width: 219px;
    background-color: #0b1124;
    color: white;
    display: flex;
    align-items: center;
    padding-left: 21px;
}

.tab-name {
    font-size: 15.7px;
    margin-top: -2px;
}

.tab-close {
    margin-left: 10px;
    color: #b7bac4;
    font-size: 15px;
}

.tab-spacer {
    flex: 1;
}

.tab-action {
    width: 75px;
    border-left: 1px solid #6a6c76;
    display: flex;
    align-items: center;
    justify-content: center;
}

.tab-add {
    width: 73px;
}

.tab-dots {
    width: 5px;
    height: 5px;
    border-radius: 50%;
    background-color: white;
    box-shadow: -8px 0 white, 8px 0 white;
}

.tab-add svg {
    width: 32px;
    height: 32px;
}

/* workspace */
.workspace {
    height: 882px;
    display: grid;
    grid-template-columns: 412px 1507px;
    grid-template-rows: 441px 441px;
}

.side-top {
    position: relative;
    background-color: #f3f4f8;
    padding: 43px 35px 0 14px;
    overflow: hidden;
}

.side-title {
    margin: 0 0 0 20px;
    font-size: 13.5px;
    line-height: 20px;
    font-weight: 500;
    color: #6c7184;
}

.side-title-next {
    margin-top: 20px;
}

.side-collapse {
    position: absolute;
    top: 27px;
    right: 0;
    width: 43px;
    height: 49px;
    background-color: #e9eaee;
    border-radius: 12px 0 0 12px;
    display: flex;
    align-items: center;
    justify-content: center;
}

.side-collapse span {
    border: 5px solid transparent;
    border-left: none;
    border-right: 6px solid #8e93a3;
}

.data-card {
    margin-top: 25px;
    margin-left: -1px;
    height: 71px;
    border: 1px solid #dfe1e7;
    border-radius: 10px;
    display: flex;
    align-items: center;
    padding: 0 14px 0 22px;
}

.db-icon {
    width: 26px;
    height: 30px;
}

.data-name {
    margin: -2px 0 0 21px;
    font-size: 15.7px;
    color: #6c7184;
}

.check-btn {
    margin-left: auto;
    width: 73px;
    height: 25px;
    padding: 0;
    background-color: transparent;
    border: 1px solid #666c80;
    border-radius: 2px;
    font-size: 13.5px;
    font-weight: 500;
    color: #6c7184;
}

.exp-card {
    margin-top: 16px;
    height: 192px;
    background-color: white;
    border-radius: 8px;
    box-shadow: 0 1px 8px #00000018;
    padding: 18px 14px 7px 13px;
}

.exp-head {
    height: 32px;
    display: flex;
    align-items: center;
    padding-left: 6px;
}

.exp-icon {
    width: 32px;
    height: 32px;
}

.exp-name {
    margin: -2px 0 0 18px;
    font-size: 15.7px;
    color: #14182b;
}

.exp-badge {
    margin-left: 7px;
    width: 19px;
    height: 20px;
    background-color: #dfe1e5;
    border-radius: 4px;
    font-size: 13px;
    font-weight: 500;
    line-height: 20px;
    text-align: center;
    color: #333;
}

.icon-tile {
    width: 31px;
    height: 32px;
    padding: 0;
    background-color: #ecedf1;
    border: none;
    border-radius: 8px;
    color: #858a9a;
    display: flex;
    align-items: center;
    justify-content: center;
}

.icon-tile svg {
    width: 23px;
    height: 23px;
}

.exp-head .icon-tile {
    margin-left: auto;
}

.exp-controls {
    margin-top: 11px;
    padding-left: 7px;
    height: 32px;
    display: flex;
    gap: 6px;
}

.run-btn {
    width: 31px;
    height: 32px;
    padding: 0;
    border: none;
    border-radius: 8px;
    background-color: #4e80fb;
}

.run-btn svg {
    width: 31px;
    height: 32px;
    display: block;
}

.run-stop {
    background-color: #c8cccb;
}

.speed {
    margin-left: 8px;
    width: 149px;
    padding-top: 12px;
}

.speed-track {
    position: relative;
    height: 6px;
    background-color: #eeeff3;
    border-radius: 3px;
}

.speed-knob {
    position: absolute;
    top: -4px;
    left: 66px;
    width: 14px;
    height: 14px;
    background-color: white;
    border-radius: 50%;
    box-shadow: 0 0 3px #00000060;
}

.speed-labels {
    margin-top: 2px;
    display: flex;
    align-items: center;
    font-size: 15px;
    color: #aeb1bd;
    line-height: 20px;
}

.speed-labels span {
    font-size: 15.5px;
}

.speed-labels i {
    width: 1px;
    height: 6px;
    margin-left: 22px;
    background-color: #9a9eac;
}

.speed-labels i:first-of-type {
    margin-left: 23px;
}

.speed-labels span:last-child {
    margin-left: auto;
}

.exp-progress {
    margin-top: 13px;
    height: 5px;
    background-color: #e0e0e0;
    border-radius: 3px;
}

.stat-row {
    margin-top: 9px;
    height: 65px;
    border: 1px solid #e2e3e8;
    border-radius: 10px;
    display: flex;
    align-items: center;
    gap: 5px;
    padding: 0 16px 0 17px;
    position: relative;
}

.stat-row::before {
    content: "";
    position: absolute;
    left: 1px;
    top: 16px;
    width: 2px;
    height: 32px;
    background-color: #f08a2a;
}

.stat-name {
    margin-right: auto;
    font-size: 15.7px;
    color: #6c7184;
}

.next-exp {
    position: absolute;
    left: 32px;
    top: 428px;
    width: 32px;
    height: 32px;
}

.side-scroll {
    position: absolute;
    top: 162px;
    right: 1px;
    width: 7px;
    height: 141px;
    border-radius: 4px;
    background-color: #757a8d;
}

/* map */
.map-pane {
    position: relative;
    overflow: hidden;
}

.map {
    display: block;
    width: 1507px;
    height: 441px;
}

.sea,
.land {
    font-family: Roboto, sans-serif;
    text-anchor: middle;
}

.sea {
    font-size: 14px;
    fill: #8f8fd8;
}

.land {
    font-size: 14px;
    font-weight: 500;
    fill: #55585f;
}

.watermark text {
    font-size: 27px;
    letter-spacing: 1px;
    fill: #50566a;
    fill-opacity: 0.17;
}

.routes path {
    fill: none;
    stroke: #6a92f4;
    stroke-width: 11;
}

.routes .route-thick {
    stroke-width: 22;
}

.node-orange,
.node-green,
.node-blue,
.node-red {
    stroke: white;
    stroke-width: 4;
    fill-opacity: 0.92;
}

.node-orange {
    fill: #e78f36;
}

.node-green {
    fill: #3ec795;
}

.node-blue {
    fill: #4f80f5;
}

.node-red {
    fill: #d94e3b;
}

.node-pale {
    fill: #6d78e2;
}

.tool-group {
    position: absolute;
    top: 31px;
    display: flex;
    border-radius: 5px;
    background-color: white;
    overflow: hidden;
    box-shadow: 0 1px 5px #00000020;
}

.tool-mode {
    left: 32px;
}

.tool-add {
    left: 168px;
}

.tool-routes {
    left: 1131px;
}

.tool {
    width: 52px;
    height: 52px;
    padding: 0;
    background-color: white;
    border: none;
    display: flex;
    align-items: center;
    justify-content: center;
}

.tool svg {
    width: 32px;
    height: 32px;
}

.tool-small {
    width: 42px;
    height: 42px;
}

.tool-small svg {
    width: 24px;
    height: 24px;
}

.tool-orange {
    background-color: #f08626;
}

.tool-grey {
    background-color: #a5aab8;
}

.add-node {
    position: relative;
    width: 32px;
    height: 32px;
    margin: 10px;
    padding: 0;
    border: none;
    border-radius: 50%;
    display: flex;
    align-items: center;
    justify-content: center;
}

.add-node svg {
    width: 18px;
    height: 18px;
}

.add-node i {
    position: absolute;
    right: -3px;
    bottom: -3px;
    width: 12px;
    height: 12px;
    border-radius: 50%;
    background-color: #f3f4f8;
    color: #8b8f9e;
    font-size: 11px;
    font-style: normal;
    font-weight: 700;
    line-height: 11px;
    text-align: center;
}

.add-blue {
    background-color: #9db7fb;
}

.add-red {
    background-color: #ef9c92;
}

.add-orange {
    background-color: #fbbc83;
}

.add-green {
    background-color: #90e5c4;
}

.map-filter,
.map-show {
    position: absolute;
    top: 31px;
    height: 42px;
    padding: 0;
    background-color: white;
    border: none;
    border-radius: 5px;
    box-shadow: 0 1px 5px #00000020;
    color: #7a7e8f;
    font-size: 15.5px;
    display: flex;
    align-items: center;
}

.map-filter {
    left: 1269px;
    width: 84px;
    padding-left: 11px;
}

.map-filter svg {
    width: 20px;
    height: 22px;
    margin-right: 6px;
}

.map-show {
    left: 1364px;
    width: 113px;
    padding-left: 10px;
}

.map-show svg:first-child {
    width: 21px;
    height: 14px;
    margin-right: 6px;
}

.show-chevron {
    width: 14px;
    height: 10px;
    margin-left: 9px;
}

.zoom-box {
    position: absolute;
    left: 32px;
    top: 253px;
    width: 41px;
    height: 84px;
    background-color: #e2e9fb;
    border-radius: 6px;
    display: flex;
    flex-direction: column;
}

.zoom-box button {
    flex: 1;
    padding: 0;
    background-color: transparent;
    border: none;
    color: #6c7184;
    font-size: 20px;
}

.zoom-box button:first-child {
    border-bottom: 1px solid white;
}

.zoom-full {
    position: absolute;
    left: 32px;
    top: 347px;
    width: 41px;
    height: 42px;
    padding: 0;
    background-color: #e2e9fb;
    border: none;
    border-radius: 6px;
    color: #6c7184;
    display: flex;
    align-items: center;
    justify-content: center;
}

.zoom-full svg {
    width: 21px;
    height: 21px;
}

.map-tip {
    position: absolute;
    left: 417px;
    top: 319px;
    width: 155px;
    height: 31px;
    background-color: #f3f4f8;
    border: 1px solid #b4b7c1;
    border-radius: 7px;
    color: #14182b;
    font-size: 15.3px;
    line-height: 27px;
    text-align: center;
}

.map-note {
    position: absolute;
    left: 0;
    right: 0;
    bottom: 0;
    height: 31px;
    padding-bottom: 2px;
    background-color: #50566af2;
    color: white;
    font-size: 15.7px;
    display: flex;
    align-items: center;
    padding-left: 474px;
    gap: 27px;
}

.map-note a {
    display: flex;
    align-items: center;
    gap: 8px;
}

.map-note svg {
    width: 16px;
    height: 16px;
}

.map-corner {
    position: absolute;
    right: 0;
    bottom: 0;
    width: 83px;
    height: 42px;
    background-color: #f3f4f8;
    border-radius: 8px 0 0 0;
    color: #6c7184;
    display: flex;
    align-items: center;
    padding-left: 12px;
}

.corner-expand {
    width: 21px;
    height: 21px;
}

.corner-chevron {
    width: 14px;
    height: 10px;
    margin-left: 22px;
}

/* pages */
.pages {
    position: relative;
    background-color: white;
    border-right: 1px solid #e2e3e8;
    overflow: hidden;
}

.pages-head {
    height: 74px;
    border-bottom: 1px solid #e2e3e8;
    display: flex;
    align-items: center;
    justify-content: space-between;
    padding: 0 21px 0 21px;
}

.pages-head h2 {
    margin: -2px 0 0;
    font-size: 21px;
    font-weight: 500;
    color: #252a3d;
}

.plus-btn {
    width: 31px;
    height: 32px;
    padding: 0;
    background-color: #f2f3f7;
    border: 1px solid #e2e3e8;
    border-radius: 6px;
    color: #6c7184;
    font-size: 18px;
    font-weight: 500;
}

.page-list {
    list-style: none;
    margin: 21px 39px 0 21px;
    padding: 0;
}

.page-list li {
    position: relative;
    height: 40px;
    margin-bottom: 12.3px;
    padding-left: 42px;
    border: 1px solid transparent;
    border-radius: 6px;
    font-size: 18.2px;
    line-height: 36px;
    color: #6c7184;
}

.page-list li::before {
    content: "";
    position: absolute;
    left: 16px;
    top: 13px;
    width: 11px;
    height: 11px;
    border-radius: 50%;
    background-color: #6f7488;
}

.page-list .selected {
    background-color: #fdf8f2;
    border-color: #f08a2a;
    color: #4a4e5c;
}

.page-list .selected::before {
    background-color: #f08626;
}

.page-menu {
    position: absolute;
    right: 23px;
    top: 9px;
    width: 7px;
    height: 20px;
    color: #6c7184;
}

.pages-scroll {
    position: absolute;
    left: 398px;
    top: 79px;
    width: 8px;
    height: 340px;
    border-radius: 4px;
    background-color: #757a8d;
}

.pages-collapse {
    position: absolute;
    right: 0;
    bottom: 0;
    width: 42px;
    height: 40px;
    padding: 0 4px 0 0;
    background-color: white;
    border: 1px solid #e2e3e8;
    border-right: none;
    border-bottom: none;
    border-radius: 8px 0 0 0;
    display: flex;
    align-items: center;
    justify-content: center;
}

.pages-collapse span {
    border: 7px solid transparent;
    border-left: none;
    border-right: 10px solid #5f6476;
}

/* dashboard */
.dash {
    position: relative;
    background-color: #f3f4f8;
    overflow: hidden;
}

.dash-head {
    height: 73px;
    background-color: white;
    display: flex;
    align-items: center;
    padding-left: 21px;
}

.dash-head h2 {
    margin: -2px 0 0;
    font-size: 21px;
    font-weight: 500;
    word-spacing: -3px;
    color: #5f6476;
}

.dash-btn {
    height: 41px;
    padding: 0;
    border: 1px solid #e2e3e8;
    border-radius: 6px;
    color: #6c7184;
    font-size: 15.5px;
    display: flex;
    align-items: center;
}

.dash-add {
    margin-left: 21px;
    width: 153px;
    background-color: #f2f3f7;
    padding-left: 14px;
}

.dash-add span {
    margin-right: 11px;
    font-size: 18px;
}

.dash-kpi {
    margin-left: 21px;
    width: 153px;
    background-color: white;
    padding-left: 10px;
}

.dash-kpi svg:first-child {
    width: 21px;
    height: 21px;
    margin-right: 5px;
}

.kpi-chevron {
    width: 14px;
    height: 10px;
    margin-left: 8px;
}

.kpi-band {
    height: 75px;
    background-color: #ecedf2;
    border-top: 1px solid #e2e3e8;
    border-bottom: 1px solid #e2e3e8;
    padding: 16px 20px 0 16px;
}

.kpi-strip {
    display: flex;
    gap: 18px;
    overflow: hidden;
}

.kpi {
    flex: none;
    height: 41px;
    background-color: #f7f9ff;
    border: 1px solid #5b87f0;
    border-radius: 6px;
    display: flex;
    align-items: center;
    padding: 0 8.5px 0 13px;
    font-size: 18.3px;
}

.grip {
    width: 12px;
    height: 18px;
    margin-right: 15px;
    color: #6c7184;
}

.kpi-label {
    color: #6c7184;
    margin: 2px 11px 0 0;
}

.kpi-value {
    color: #4d7df0;
    margin-top: 2px;
}

.kpi-na {
    margin-left: 11px;
    height: 23px;
    padding: 0 8px;
    background-color: #eef3ff;
    border: 1px solid #4d7df0;
    border-radius: 6px;
    color: #4d7df0;
    font-size: 16.5px;
    font-weight: 600;
    line-height: 20px;
}

.kpi-scroll {
    margin-top: 5px;
    width: 1291px;
    height: 8px;
    border-radius: 4px;
    background-color: #757a8d;
}

.charts {
    display: grid;
    grid-template-columns: repeat(3, 473px);
    gap: 23px;
    padding: 20px 0 0 17px;
}

.chart-card {
    height: 300px;
    background-color: white;
    border: 1px solid #e6e7ec;
    border-radius: 10px;
}

.chart-head {
    height: 46px;
    border-bottom: 1px solid #e2e3e8;
    display: flex;
    align-items: center;
    padding-left: 20px;
    color: #6c7184;
}

.chart-head span {
    margin-right: auto;
    font-size: 15.5px;
    color: #55596a;
}

.ch-gear {
    width: 25px;
    height: 25px;
    margin-right: 17px;
}

.ch-expand {
    width: 22px;
    height: 22px;
    margin-right: 28px;
}

.ch-dots {
    width: 7px;
    height: 20px;
    margin-right: 30px;
}

.plot {
    display: block;
    width: 472px;
    height: 226px;
}

.axis path {
    fill: none;
    stroke: #333a4f;
    stroke-width: 3;
}

.axis .spine {
    stroke-width: 4;
}

.ticks text {
    font-family: "Liberation Sans", sans-serif;
    font-size: 38px;
    text-anchor: end;
    fill: #14101f;
}

.ln {
    fill: none;
    stroke-linejoin: round;
}

.charts-scroll {
    position: absolute;
    right: 4px;
    top: 154px;
    width: 8px;
    height: 198px;
    border-radius: 4px;
    background-color: #757a8d;
}
```
